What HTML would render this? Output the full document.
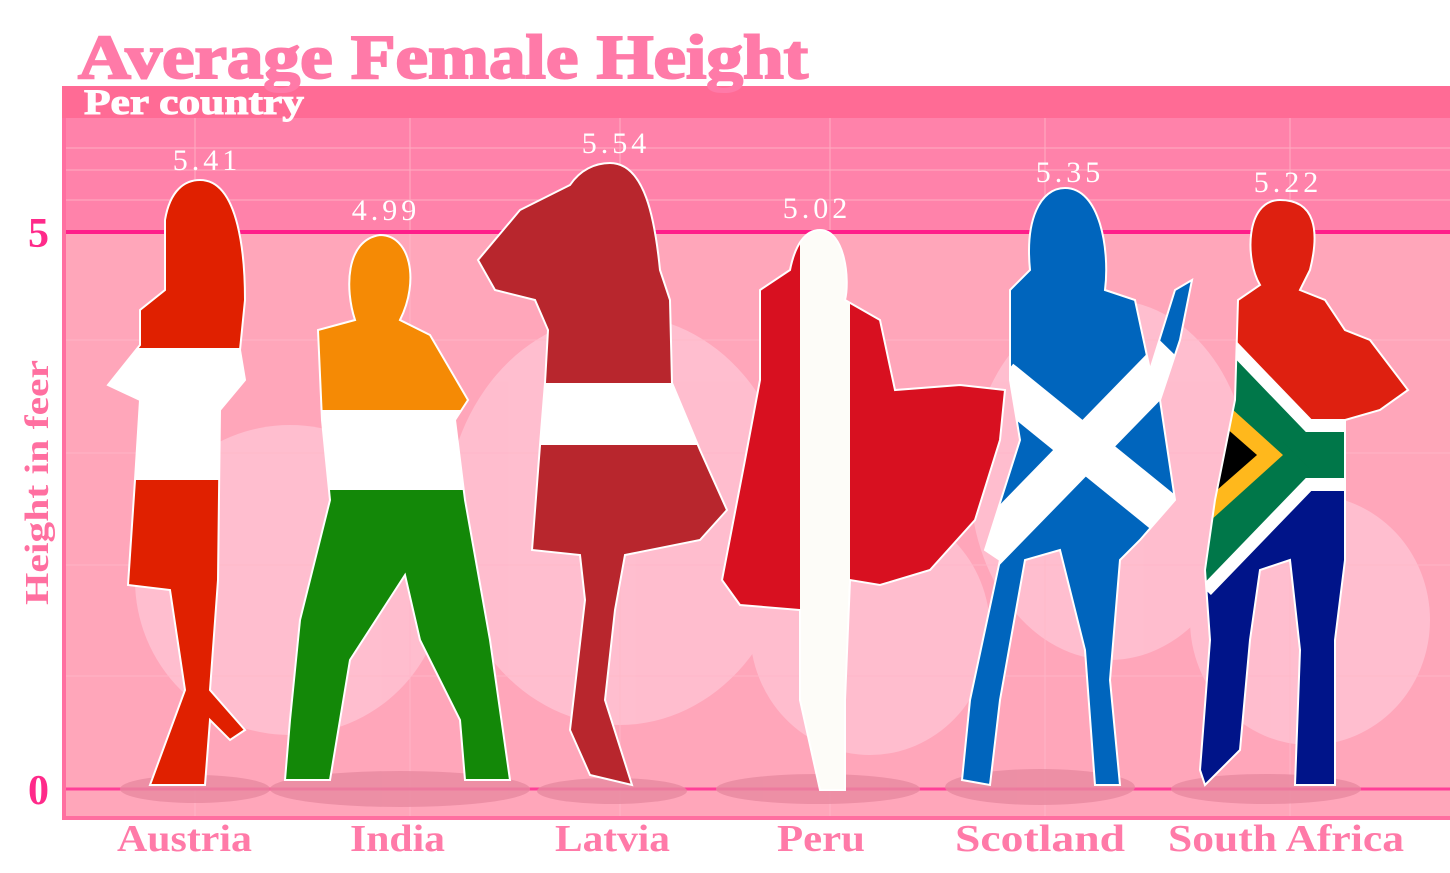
<!DOCTYPE html>
<html><head><meta charset="utf-8"><style>
html,body{margin:0;padding:0;background:#fff;width:1450px;height:873px;overflow:hidden}
svg{display:block}
</style></head><body>
<svg width="1450" height="873" viewBox="0 0 1450 873" xmlns="http://www.w3.org/2000/svg">
<defs>
<clipPath id="cA"><path d="M200 180 C240 180 245 260 245 300 L240 350 L245 380 L220 410 L218 580 L210 690 L245 730 L230 740 L210 720 L205 785 L150 785 L185 690 L170 590 L128 585 L135 480 L140 400 L108 385 L140 345 L140 310 L165 290 L165 220 C170 190 185 180 200 180 Z"/></clipPath>
<clipPath id="cI"><path d="M380 235 C410 235 420 280 400 320 L430 335 L468 400 L455 420 L465 500 L490 640 L510 780 L465 780 L460 720 L420 640 L405 575 L350 660 L330 780 L285 780 L290 720 L300 620 L330 500 L322 420 L318 330 L355 320 C345 290 345 240 380 235 Z"/></clipPath>
<clipPath id="cL"><path d="M610 163 C645 163 655 220 660 270 L670 300 L672 383 L700 450 L727 510 L700 540 L625 555 L615 610 L605 700 L632 785 L590 775 L570 730 L585 600 L580 555 L532 550 L540 445 L545 383 L548 330 L535 300 L495 290 L478 260 L520 210 L570 185 C580 170 595 163 610 163 Z"/></clipPath>
<clipPath id="cP"><path d="M820 230 C845 230 850 280 845 300 L880 320 L895 390 L960 385 L1005 390 L1000 440 L975 520 L930 570 L880 585 L850 580 L845 700 L845 790 L820 790 L800 700 L800 610 L740 605 L722 580 L745 460 L760 380 L760 290 L790 270 C795 245 805 230 820 230 Z"/></clipPath>
<clipPath id="cS"><path d="M1065 188 C1100 188 1110 250 1105 290 L1135 300 L1150 370 L1175 290 L1192 280 L1180 340 L1160 400 L1175 500 L1140 540 L1120 560 L1110 680 L1120 785 L1095 785 L1085 650 L1060 550 L1025 560 L1000 700 L990 785 L962 780 L970 700 L1000 560 L985 550 L1020 440 L1010 380 L1010 290 L1030 270 C1025 220 1040 188 1065 188 Z"/></clipPath>
<clipPath id="cZ"><path d="M1280 200 C1315 200 1320 230 1310 270 L1300 290 L1325 300 L1345 330 L1370 340 L1408 390 L1380 410 L1345 420 L1345 560 L1335 640 L1335 785 L1295 785 L1300 650 L1290 560 L1260 570 L1250 640 L1240 750 L1205 785 L1200 770 L1210 640 L1205 570 L1215 500 L1235 400 L1238 300 L1260 285 C1245 260 1245 200 1280 200 Z"/></clipPath>
</defs>
<rect width="1450" height="873" fill="#fff"/>
<rect x="62" y="86" width="1390" height="734" fill="#ff6fa0"/>
<rect x="62" y="86" width="1390" height="32" fill="#ff6b95"/>
<rect x="66" y="118" width="1384" height="114" fill="#ff82aa"/>
<rect x="66" y="232" width="1384" height="584" fill="#ffa6ba"/>
<g fill="#ffc2d2" opacity="0.85">
<ellipse cx="290" cy="580" rx="155" ry="155"/>
<ellipse cx="620" cy="520" rx="175" ry="205"/>
<ellipse cx="870" cy="630" rx="120" ry="125"/>
<ellipse cx="1110" cy="480" rx="140" ry="180"/>
<ellipse cx="1310" cy="620" rx="120" ry="125"/>
</g>
<g stroke="#ffb8ca" stroke-width="1" opacity="0.8">
<line x1="66" y1="148" x2="1450" y2="148"/><line x1="66" y1="170" x2="1450" y2="170"/>
<line x1="66" y1="200" x2="1450" y2="200"/><line x1="66" y1="340" x2="1450" y2="340"/>
<line x1="66" y1="453" x2="1450" y2="453"/><line x1="66" y1="565" x2="1450" y2="565"/>
<line x1="66" y1="676" x2="1450" y2="676"/>
<line x1="195" y1="118" x2="195" y2="816"/><line x1="410" y1="118" x2="410" y2="816"/>
<line x1="620" y1="118" x2="620" y2="816"/><line x1="830" y1="118" x2="830" y2="816"/>
<line x1="1045" y1="118" x2="1045" y2="816"/><line x1="1290" y1="118" x2="1290" y2="816"/>
</g>
<line x1="66" y1="232" x2="1450" y2="232" stroke="#ff1f8a" stroke-width="4"/>
<line x1="66" y1="789" x2="1450" y2="789" stroke="#ff3f98" stroke-width="3"/>
<g fill="#e88aa0" opacity="0.8">
<ellipse cx="195" cy="789" rx="75" ry="14"/><ellipse cx="400" cy="789" rx="130" ry="18"/>
<ellipse cx="612" cy="791" rx="75" ry="13"/><ellipse cx="818" cy="789" rx="102" ry="15"/>
<ellipse cx="1040" cy="787" rx="95" ry="18"/><ellipse cx="1266" cy="789" rx="95" ry="15"/>
</g>
<g clip-path="url(#cA)"><rect x="100" y="170" width="160" height="630" fill="#e02000"/><rect x="100" y="348" width="160" height="132" fill="#fff"/></g>
<g clip-path="url(#cI)"><rect x="280" y="230" width="240" height="560" fill="#f58a05"/><rect x="280" y="410" width="240" height="80" fill="#fff"/><rect x="280" y="490" width="240" height="300" fill="#138808"/></g>
<g clip-path="url(#cL)"><rect x="470" y="160" width="270" height="640" fill="#b8262d"/><rect x="470" y="383" width="270" height="62" fill="#fff"/></g>
<g clip-path="url(#cP)"><rect x="715" y="225" width="300" height="570" fill="#d81020"/><rect x="800" y="225" width="50" height="570" fill="#fdfcf8"/></g>
<g clip-path="url(#cS)"><rect x="955" y="185" width="245" height="610" fill="#0065bd"/>
<line x1="1000" y1="380" x2="1185" y2="530" stroke="#fff" stroke-width="42"/><line x1="1175" y1="355" x2="985" y2="550" stroke="#fff" stroke-width="42"/></g>
<g clip-path="url(#cZ)"><rect x="1195" y="195" width="220" height="600" fill="#de2010"/>
<polygon points="1180,590 1298,478 1420,478 1420,800 1180,800" fill="#001489"/>
<polyline points="1195,350 1296,455 1420,455" fill="none" stroke="#fff" stroke-width="72"/>
<line x1="1296" y1="455" x2="1185" y2="570" stroke="#fff" stroke-width="72"/>
<polyline points="1195,350 1296,455 1420,455" fill="none" stroke="#007749" stroke-width="46"/>
<line x1="1296" y1="455" x2="1185" y2="570" stroke="#007749" stroke-width="46"/>
<polygon points="1200,380 1283,455 1200,530" fill="#ffb81c"/>
<polygon points="1200,405 1257,455 1200,505" fill="#000"/></g>
<g fill="none" stroke="#fff" stroke-width="2">
<path d="M200 180 C240 180 245 260 245 300 L240 350 L245 380 L220 410 L218 580 L210 690 L245 730 L230 740 L210 720 L205 785 L150 785 L185 690 L170 590 L128 585 L135 480 L140 400 L108 385 L140 345 L140 310 L165 290 L165 220 C170 190 185 180 200 180 Z"/>
<path d="M380 235 C410 235 420 280 400 320 L430 335 L468 400 L455 420 L465 500 L490 640 L510 780 L465 780 L460 720 L420 640 L405 575 L350 660 L330 780 L285 780 L290 720 L300 620 L330 500 L322 420 L318 330 L355 320 C345 290 345 240 380 235 Z"/>
<path d="M610 163 C645 163 655 220 660 270 L670 300 L672 383 L700 450 L727 510 L700 540 L625 555 L615 610 L605 700 L632 785 L590 775 L570 730 L585 600 L580 555 L532 550 L540 445 L545 383 L548 330 L535 300 L495 290 L478 260 L520 210 L570 185 C580 170 595 163 610 163 Z"/>
<path d="M820 230 C845 230 850 280 845 300 L880 320 L895 390 L960 385 L1005 390 L1000 440 L975 520 L930 570 L880 585 L850 580 L845 700 L845 790 L820 790 L800 700 L800 610 L740 605 L722 580 L745 460 L760 380 L760 290 L790 270 C795 245 805 230 820 230 Z"/>
<path d="M1065 188 C1100 188 1110 250 1105 290 L1135 300 L1150 370 L1175 290 L1192 280 L1180 340 L1160 400 L1175 500 L1140 540 L1120 560 L1110 680 L1120 785 L1095 785 L1085 650 L1060 550 L1025 560 L1000 700 L990 785 L962 780 L970 700 L1000 560 L985 550 L1020 440 L1010 380 L1010 290 L1030 270 C1025 220 1040 188 1065 188 Z"/>
<path d="M1280 200 C1315 200 1320 230 1310 270 L1300 290 L1325 300 L1345 330 L1370 340 L1408 390 L1380 410 L1345 420 L1345 560 L1335 640 L1335 785 L1295 785 L1300 650 L1290 560 L1260 570 L1250 640 L1240 750 L1205 785 L1200 770 L1210 640 L1205 570 L1215 500 L1235 400 L1238 300 L1260 285 C1245 260 1245 200 1280 200 Z"/>
</g>
<g font-family="Liberation Serif, serif" font-size="30" fill="#fff" letter-spacing="4" text-anchor="middle">
<text x="207" y="170">5.41</text><text x="386" y="220">4.99</text><text x="616" y="153">5.54</text>
<text x="817" y="218">5.02</text><text x="1070" y="182">5.35</text><text x="1288" y="192">5.22</text>
</g>
<text x="78" y="78" font-family="Liberation Serif, serif" font-weight="bold" font-size="62" fill="#ff7aa8" stroke="#ff7aa8" stroke-width="2" textLength="730" lengthAdjust="spacingAndGlyphs">Average Female Height</text>
<text x="84" y="114" font-family="Liberation Serif, serif" font-weight="bold" font-size="36" fill="#fff" stroke="#fff" stroke-width="1" textLength="220" lengthAdjust="spacingAndGlyphs">Per country</text>
<g font-family="Liberation Serif, serif" font-weight="bold" fill="#ff2a8a" font-size="42">
<text x="28" y="247">5</text><text x="28" y="804">0</text></g>
<text transform="translate(48,605) rotate(-90)" font-family="Liberation Serif, serif" font-weight="bold" font-size="34" fill="#ff6fa0" textLength="245" lengthAdjust="spacingAndGlyphs">Height in feer</text>
<g font-family="Liberation Serif, serif" font-weight="bold" font-size="38" fill="#ff7aa8">
<text x="117" y="851" textLength="135" lengthAdjust="spacingAndGlyphs">Austria</text>
<text x="350" y="851" textLength="95" lengthAdjust="spacingAndGlyphs">India</text>
<text x="555" y="851" textLength="115" lengthAdjust="spacingAndGlyphs">Latvia</text>
<text x="777" y="851" textLength="88" lengthAdjust="spacingAndGlyphs">Peru</text>
<text x="955" y="851" textLength="170" lengthAdjust="spacingAndGlyphs">Scotland</text>
<text x="1168" y="851" textLength="236" lengthAdjust="spacingAndGlyphs">South Africa</text>
</g>
</svg>
</body></html>
